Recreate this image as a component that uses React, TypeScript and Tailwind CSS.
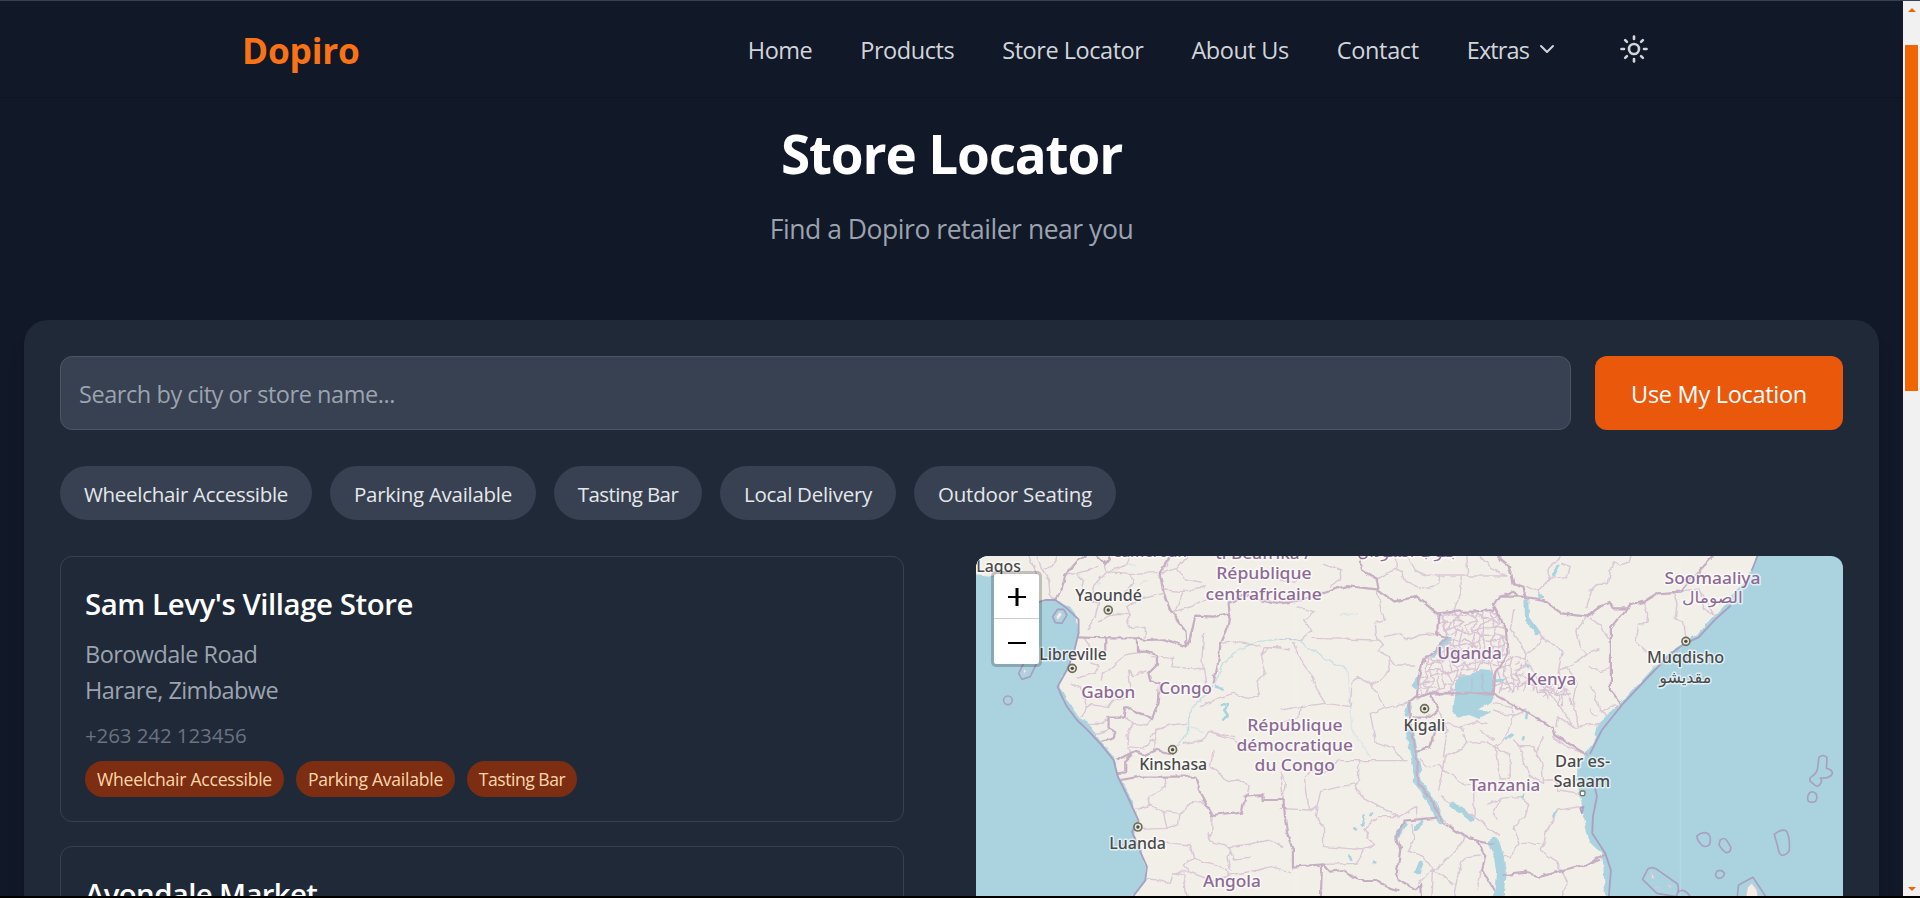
import { ChevronDown, Sun } from "lucide-react";

const navItems = [
  { label: "Home", tracking: "tracking-[-0.5px]" },
  { label: "Products", tracking: "tracking-[-0.44px]" },
  { label: "Store Locator", tracking: "tracking-[-0.46px]" },
  { label: "About Us", tracking: "tracking-[-0.4px]" },
  { label: "Contact", tracking: "tracking-[-0.35px]" },
];

const filters = [
  { label: "Wheelchair Accessible", size: "w-[252px] tracking-[-0.3px]" },
  { label: "Parking Available", size: "w-[206px] tracking-[-0.28px]" },
  { label: "Tasting Bar", size: "w-[148px] tracking-[-0.6px]" },
  { label: "Local Delivery", size: "w-[176px] tracking-[-0.28px]" },
  { label: "Outdoor Seating", size: "w-[202px] tracking-[-0.2px]" },
];

const tags = [
  { label: "Wheelchair Accessible", size: "w-[199px] tracking-[-0.27px]" },
  { label: "Parking Available", size: "w-[159px] tracking-[-0.27px]" },
  { label: "Tasting Bar", size: "w-[110px] tracking-[-0.5px]" },
];

function Header() {
  return (
    <header className="flex h-[98px] shrink-0 items-center justify-between border-b border-t border-b-[#111522] border-t-[#374151] pl-[242px] pr-[242px]">
      <span className="pt-[3px] text-[35.3px] font-bold tracking-[-0.2px] text-[#f97316]">Dopiro</span>
      <nav className="flex items-center gap-12 text-[23.5px] text-[#d1d5db]">
        {navItems.map((n) => (
          <a key={n.label} className={`whitespace-nowrap pt-[3px] ${n.tracking}`}>
            {n.label}
          </a>
        ))}
        <button className="flex items-center gap-1.5 tracking-[-0.9px]">
          <span className="pt-[3px]">Extras</span>
          <ChevronDown size={24} strokeWidth={2} />
        </button>
        <button className="p-3">
          <Sun size={30} strokeWidth={2.1} />
        </button>
      </nav>
    </header>
  );
}

/* ---------- map ---------- */

type Pt = [number, number];

function rng(seed: number) {
  let s = seed;
  return () => {
    s = (s * 16807) % 2147483647;
    return s / 2147483647;
  };
}

/* Irregular net of small districts */
function districtNet(x0: number, y0: number, cols: number, rows: number, step: number, seed: number) {
  const r = rng(seed);
  const p: Pt[][] = [];
  for (let j = 0; j < rows; j++) {
    p.push([]);
    for (let i = 0; i < cols; i++) {
      p[j].push([x0 + i * step + (r() - 0.5) * step * 1.1, y0 + j * step + (r() - 0.5) * step * 1.1]);
    }
  }
  let d = "";
  for (let j = 0; j < rows; j++) {
    for (let i = 0; i < cols; i++) {
      const [x, y] = p[j][i];
      if (i + 1 < cols && r() < 0.85) d += `M${x.toFixed(1)} ${y.toFixed(1)}L${p[j][i + 1][0].toFixed(1)} ${p[j][i + 1][1].toFixed(1)}`;
      if (j + 1 < rows && r() < 0.85) d += `M${x.toFixed(1)} ${y.toFixed(1)}L${p[j + 1][i][0].toFixed(1)} ${p[j + 1][i][1].toFixed(1)}`;
    }
  }
  return d;
}

const ugandaNet = districtNet(400, 180, 17, 16, 18, 77);
const kenyaNet = districtNet(640, 330, 13, 8, 19, 31);

const westBorders =
  "M255 150L275 110 285 75 320 35 345 18M380 18L405 42 420 22M650 290L645 240 600 180 580 130 568 70 600 18M325 262L405 265 500 265 530 270 580 268 650 290 665 245 675 197 730 200 778 190 775 160 820 135 880 150 930 160 1000 150M778 190L770 240 750 285 745 330 730 400M405 265L405 300M500 265L500 305 530 305 560 315 560 345 535 370 540 390 570 400 565 460 545 505 510 490 480 475 465 475 460 500 415 500 415 535 435 545 430 565 395 575M440 630L490 605 465 630 465 670 445 672M490 605L525 615 560 600 607 612M450 690L510 680 675 680 690 730 725 795 815 785 825 740 880 735 880 750 940 750";
const westThin =
  "M175 18L190 50 200 75M200 20L215 60 245 50 262 20M215 60L235 90 240 130 255 150M285 75L320 70 340 90 330 130M320 70L360 60 380 45M405 42L410 65 480 70 560 68M480 18L470 45 410 65M410 65L370 110 360 150 385 160 375 200 350 240M455 140L490 100 480 70M385 215L440 190 480 195 470 170 500 150 580 130M480 195L470 215 485 235 525 232 525 262M568 70L620 55 650 18M580 120L640 125 700 110M605 185L650 175 690 155 730 145M620 60L650 90 690 100M345 265L370 300 405 300M370 300L360 340 385 345 372 370 320 385M405 300L400 320M445 330L475 312 530 305M445 330L430 355 400 365 390 390M475 360L490 380 530 360M475 360L480 400 465 440 430 450 415 470 360 460 335 500M545 320L610 325 605 350 700 360 710 430M300 400L330 410 350 470M415 505L395 520 350 520M415 540L370 555M460 500L490 520 470 555 475 590 520 595 540 570 560 575M490 520L530 525 545 505M540 560L560 540 600 525 650 520M475 590L485 620M560 545L550 600M640 580L700 570 715 545 790 570 830 600M730 600L720 650 750 670 770 695 800 690 840 705M715 545L790 560M690 470L740 445 790 430 830 445 870 430 860 390 885 370 870 320 900 290 960 300M870 320L885 290 930 290M585 685L588 710 535 738 540 765 500 778M540 765L580 785 630 790 650 765 695 755 725 790M630 790L625 820 590 835 510 838M580 785L590 835M725 795L725 850 715 860 730 880 775 890 780 910 770 920 780 960M775 890L820 885 900 870 940 890M720 865L710 850M545 870L610 880 660 885 670 925 720 940 770 960 775 975M670 925L640 945 655 965 610 968 600 1000 530 985M610 968L640 975 650 1040M655 965L720 990 775 975 870 960 900 950 960 965M780 900L790 930 840 925M840 705L835 730 820 740M930 680L935 750M600 18L590 50M640 130L615 180M700 250L695 330 710 420M750 280L800 275 870 290";
const midBorders =
  "M240 18L245 60 290 90 295 118M70 150L130 130 165 118 200 108 290 118 340 155 410 140 470 190 530 185 580 185 635 180 660 140 730 140 790 150 845 190 920 200 960 170M640 165L680 240 685 310 645 370 640 430M475 190L470 255 500 265 465 300 430 330 415 380 410 440 385 460M410 445L450 430 640 430 820 535 825 555 920 615M385 460L395 560 410 640 415 700 460 760 490 820 550 855 600 872 640 880M450 430L475 480 450 500 400 500M475 520L450 590 410 605M470 803L375 812 350 860 360 900 350 970 355 990 410 1018 420 1005 422 1040M670 975L740 968 780 980 840 965 920 945 960 930M590 870L615 920 605 960 640 1020M650 18L685 45 700 100 730 110 735 140M660 140L700 125 715 140M10 750L12 780 20 850 38 900 38 950 130 943 150 965 190 960 230 990 290 990 320 1010 355 1020M125 945L122 1040";
const midThin =
  "M290 88L345 55 365 65 370 90 410 110 440 115 475 100 478 80M345 20L350 60M385 22L405 60 440 75 475 78 680 78M540 78L538 130 520 185M560 18L562 75M600 20L640 60 680 78M130 40L185 60 180 90 150 110M0 90L40 100 80 60M50 170L100 185 70 210 95 240 60 270 0 265M95 265L290 270 285 220 310 210 300 170 290 118M290 270L310 285 290 300 325 320 345 345 400 345M310 260L360 250 375 270 420 255 470 250M325 320L330 360 300 390 270 400 230 380M40 280L60 330 90 370 110 420 135 460 210 470 215 400 235 380M270 400L290 430 300 450 315 475 385 455M315 475L270 490 285 575 340 595 370 632M0 480L60 470 135 460M60 470L55 500 0 520M180 632L380 632M235 635L235 690 225 710 245 740 300 770 355 800M75 680L90 660 130 670 175 632M75 680L85 780 0 775M85 780L110 770 120 725 180 710 230 700M110 770L105 800 130 830 130 890 200 895 250 900 230 940 130 943M250 900L280 885 250 840 290 800 355 800 410 770 408 800M0 670L15 700 8 750M475 720L490 660 480 640 440 650 420 630M490 660L520 680 550 700 590 710M490 660L495 620 540 600 560 580 620 575 645 590 680 560 695 500 740 480M560 580L545 530 590 515 620 520M495 520L545 530M475 480L500 540 490 620M645 590L650 630 660 690 690 680 690 620 645 590M720 590L730 640 750 680 790 700 785 640 760 590 720 590 700 570M790 560L770 600M820 560L860 590 910 610M790 690L830 690 835 720 900 730M580 720L582 800 620 830 660 860M582 800L530 770 480 740M620 760L660 745 720 740 745 760 735 800 700 830 720 880 690 920 640 920M660 745L640 790 650 810M720 880L790 880 780 900 830 935 845 965M790 880L800 840 820 810 830 780 905 770M845 965L860 1000 845 1040M480 800L550 860 545 880 490 940 440 975 415 1000M395 820L400 870 385 900 430 920 460 960 520 1000M460 960L455 1040M550 860L600 870M520 1040L540 940 560 920 600 915M600 960L590 1020M480 195L500 250M690 320L740 330 780 400 830 460 880 530 960 520M700 180L690 240 740 310 770 290 785 260 830 290 845 310 835 360 870 350 920 310 960 300M785 260L775 245M835 360L850 420 880 470 895 530M780 420L860 440 870 430M740 310L735 345 700 360M920 200L890 240 900 290 920 310M740 110L770 125 810 85 800 60 840 20M810 85L860 80 870 50 845 40M920 170L940 110 960 100M770 125L780 140M830 530L835 500 880 530M640 480L700 500 695 470 640 460M600 540L640 570M860 350L890 400 880 460";
const eastBorders =
  "M0 190L25 170 60 158 70 175 110 175 125 165 160 155 200 130 270 125 300 90 370 18M110 175L62 235 62 420 95 465M0 940L45 910";
const eastThin =
  "M0 120L20 100 55 100 60 60 70 35 90 45 120 35 125 18M160 160L172 190 170 220 145 222 138 275 170 305M250 128L260 160 255 205 280 215 287 262M0 205L30 225 40 250 60 265M0 350L30 365 60 355M0 405L15 430 30 485 60 470 95 465M30 485L50 500M0 480L20 500M270 125L330 120 375 200M330 120L340 175 375 195";

function City({ x, y }: { x: number; y: number }) {
  return (
    <g>
      <circle cx={x} cy={y} r="12" fill="#e9e7d8" stroke="#6f6d5f" strokeWidth="5" />
      <circle cx={x} cy={y} r="5" fill="#4b4a42" />
    </g>
  );
}

function Label({ x, x2, y, t, kind }: { x: number; x2: number; y: number; t: string; kind: "city" | "land" }) {
  return (
    <text
      x={x}
      y={y}
      textLength={x2 - x}
      lengthAdjust="spacingAndGlyphs"
      fontSize={kind === "city" ? 49 : 48}
      fontWeight="500"
      className={kind === "city" ? "fill-[#4a4a4c]" : "fill-[#8d6a95]"}
      stroke="#ffffff"
      strokeOpacity="0.65"
      strokeWidth="9"
      strokeLinejoin="round"
      paintOrder="stroke"
    >
      {t}
    </text>
  );
}

function MapDrawing() {
  const thin = { stroke: "#dac8d6", strokeWidth: 4.2 };
  const thick = { stroke: "#c6aec3", strokeWidth: 6.5 };
  const water = { stroke: "#aad3df", fill: "none" };
  return (
    <svg viewBox="976 556 867 340" className="block h-full w-full bg-[#aad3df]" fontFamily="'Noto Sans', 'DejaVu Sans', sans-serif">
      <defs>
        <filter id="rough" filterUnits="userSpaceOnUse" x="0" y="0" width="2700" height="1100" colorInterpolationFilters="sRGB">
          <feTurbulence type="fractalNoise" baseFrequency="0.035" numOctaves="2" seed="4" result="n" />
          <feDisplacementMap in="SourceGraphic" in2="n" scale="16" xChannelSelector="R" yChannelSelector="G" />
        </filter>
        <clipPath id="uganda">
          <path d="M475 190L530 185 635 180 645 168 682 240 685 310 645 370 640 430 450 430 410 445 415 380 430 330 465 300 500 265 470 255Z" />
        </clipPath>
        <clipPath id="kenya">
          <path d="M685 310L725 340 730 375 780 400 860 410 880 460 840 470 760 420 690 430 640 425 645 370Z" />
        </clipPath>
      </defs>
      <g transform="translate(970 550) scale(0.33333)" fill="none" strokeLinejoin="round" strokeLinecap="round">
        <g filter="url(#rough)">
          <path
            fill="#f2efe9"
            d="M0 0L0 72 70 78 140 120 200 155 250 150 285 165 318 190 325 250 315 300 298 350 275 385 270 410 300 465 325 500 350 515 395 580 430 620 448 680 480 740 505 810 492 850 510 900 530 950 525 990 480 1050L1905 1050 1900 960 1895 905 1865 885 1850 850 1840 790 1830 740 1820 690 1822 650 1840 620 1860 590 1875 560 1882 525 1905 503 1960 450 2030 375 2100 305 2145 275 2185 250 2235 195 2270 160 2300 120 2335 80 2350 45 2365 0Z"
          />
          <g {...thin}>
            <path d={westThin} />
            <path d={midThin} transform="translate(930 0)" />
            <path d={eastThin} transform="translate(1860 0)" />
          </g>
          <g transform="translate(930 0)" stroke="#d8c4d4" strokeWidth="4">
            <path d={ugandaNet} clipPath="url(#uganda)" />
            <path d={kenyaNet} clipPath="url(#kenya)" />
          </g>
          <g {...water} transform="translate(930 0)">
            <path fill="#aad3df" stroke="none" d="M522 405L535 382 560 378 600 360 638 365 642 430 630 455 598 478 630 488 600 507 560 495 530 503 516 490 518 460 528 440Z" />
            <path d="M388 545L398 600 412 660 408 690 430 718 455 760 482 812" strokeWidth="21" />
            <path d="M500 268L460 312M415 388L403 408M388 464L381 495" strokeWidth="16" />
            <path d="M740 152L742 208 768 245" strokeWidth="15" />
            <path d="M640 875L655 915 662 965 655 1050" strokeWidth="29" />
            <path d="M518 765L575 808M375 822L352 858M422 940L412 965M425 818L410 832" strokeWidth="15" />
            <path d="M835 45L820 78M775 140L788 140M740 490L738 505M700 555L680 568M730 562L728 568M645 392L672 390M820 800L828 785M250 800L245 825M275 785L270 795M225 835L230 838M205 920L210 926M725 742L730 738M280 938L282 940M740 346L742 348" strokeWidth="8" />
          </g>
          <path {...water} d="M740 410L760 415M755 462L775 465 762 480 772 495 762 512" strokeWidth="8" />
          <path {...water} strokeOpacity="0.6" d="M735 400L760 340 800 300 860 275 930 267 980 267 1030 305 1090 340 1130 355M655 495L680 460 730 410M655 495L655 550 610 595" strokeWidth="4" />
          <path {...water} strokeOpacity="0.3" d="M1130 355L1135 430 1145 540 1200 620M660 533L700 545M475 45L495 50M510 105L530 95M380 105L388 100M1110 195L1160 190" strokeWidth="4" />
          <g {...thick}>
            <path d={westBorders} />
            <path d={midBorders} transform="translate(930 0)" />
            <path d={eastBorders} transform="translate(1860 0)" />
          </g>
          <path d="M1505 388V425M1538 370V428" stroke="#b4bfd3" strokeWidth="4" />
        </g>
        <g stroke="#a8a0c0" strokeWidth="5.5">
          <path d="M70 78L140 120 200 158 225 150 255 150 290 175 325 208 325 250 310 310 290 360 262 410 275 440 290 470 320 510 350 538 392 583 430 630 443 680 472 740 505 812 485 845 508 900 530 950 525 992 480 1050" />
          <path d="M2362 18L2345 60M2280 168L2235 208 2185 262 2145 280 2100 312 2025 390 1955 465 1895 540 1860 610M1870 690L1880 740 1868 800 1866 850 1905 910 1922 960 1915 1050" />
        </g>
        <g stroke="#a8a0c0" strokeWidth="5">
          <path d="M262 178L280 178 290 195 275 220 255 218 247 200ZM175 330L200 338 180 380 155 388 145 370 160 340Z" />
          <circle cx="113" cy="451" r="13" />
          <path d="M1830 775L1840 770 1835 790Z" />
        </g>
        <path fill="#f2efe9" stroke="#d9c6d5" strokeWidth="2" d="M270 185L275 195 262 210 258 200ZM160 358L168 362 162 372Z" />
        <g transform="translate(1860 0)" stroke="#a8a0c0" strokeWidth="5">
          <path d="M686 622Q698 612 710 622Q710 645 708 655Q728 658 726 672Q718 686 690 684Q698 692 690 702Q684 712 675 706L660 694Q656 684 664 680Q680 670 682 655ZM658 728Q668 722 676 730Q684 742 676 754Q665 760 655 754Q648 742 658 728ZM320 858Q338 842 355 852Q364 862 358 884Q346 894 336 886Q320 872 320 858ZM390 870Q402 860 410 872L422 892Q422 908 408 908Q396 902 386 884ZM552 853Q572 836 588 842Q600 860 597 902Q590 916 574 916Q566 912 563 892ZM380 964Q394 956 403 970Q400 984 386 985Q370 980 380 964ZM157 988L172 958Q184 948 200 958L262 1002Q268 1020 258 1040L200 1030ZM262 1028Q280 1010 300 1040M440 1050L445 1005 488 982 530 1045" />
          <path fill="#f2efe9" stroke="#d9c6d5" strokeWidth="3" d="M182 965L185 985 192 985ZM195 1012L210 1014ZM232 1005L245 1010 238 1012ZM465 1050L472 1012 485 1000 500 1020 505 1050Z" />
        </g>
        <path d="M977 18V1040M2130 18V1040" stroke="#ffffff" strokeOpacity="0.18" strokeWidth="3" />
        <City x={414} y={180} />
        <City x={306} y={355} />
        <City x={607} y={599} />
        <City x={503} y={831} />
        <City x={1363} y={476} />
        <City x={2147} y={274} />
        <rect x="1830" y="723" width="14" height="14" rx="4" fill="#ffffff" stroke="#77756a" strokeWidth="4" />
        <Label kind="land" x={425} x2={650} y={21} t="Cameroun" />
        <Label kind="land" x={735} x2={1022} y={27} t="tî Bêafrîka /" />
        <Label kind="land" x={1160} x2={1465} y={21} t="جنوب السودان" />
        <Label kind="city" x={18} x2={152} y={66} t="Lagos" />
        <Label kind="city" x={315} x2={515} y={152} t="Yaoundé" />
        <Label kind="city" x={207} x2={410} y={330} t="Libreville" />
        <Label kind="land" x={333} x2={495} y={443} t="Gabon" />
        <Label kind="land" x={567} x2={725} y={433} t="Congo" />
        <Label kind="city" x={507} x2={711} y={661} t="Kinshasa" />
        <Label kind="city" x={417} x2={587} y={897} t="Luanda" />
        <Label kind="land" x={698} x2={872} y={1012} t="Angola" />
        <Label kind="land" x={738} x2={1024} y={88} t="République" />
        <Label kind="land" x={706} x2={1055} y={150} t="centrafricaine" />
        <Label kind="land" x={831} x2={1117} y={544} t="République" />
        <Label kind="land" x={799} x2={1148} y={604} t="démocratique" />
        <Label kind="land" x={853} x2={1094} y={664} t="du Congo" />
        <Label kind="land" x={1401} x2={1595} y={328} t="Uganda" />
        <Label kind="land" x={1669} x2={1818} y={405} t="Kenya" />
        <Label kind="city" x={1300} x2={1425} y={544} t="Kigali" />
        <Label kind="land" x={1496} x2={1710} y={722} t="Tanzania" />
        <Label kind="city" x={1754} x2={1920} y={651} t="Dar es-" />
        <Label kind="city" x={1750} x2={1920} y={711} t="Salaam" />
        <Label kind="land" x={2083} x2={2371} y={101} t="Soomaaliya" />
        <Label kind="land" x={2135} x2={2318} y={160} t="الصومال" />
        <Label kind="city" x={2030} x2={2262} y={339} t="Muqdisho" />
        <Label kind="city" x={2067} x2={2223} y={400} t="مقديشو" />
      </g>
    </svg>
  );
}

function StoreMap() {
  return (
    <div className="relative h-[340px] overflow-hidden rounded-t-xl">
      <MapDrawing />
      <div className="absolute left-[15px] top-[15px] flex flex-col rounded-[5px] border-[3px] border-black/20 bg-white bg-clip-padding">
        <button aria-label="Zoom in" className="flex h-[45px] w-[45px] items-center justify-center border-b border-[#ccc] pl-px pt-0.5">
          <svg width="18" height="18" viewBox="0 0 18 18">
            <path d="M0 9h18" stroke="#000" strokeWidth="2" />
            <path d="M9 0v18" stroke="#000" strokeWidth="3" />
          </svg>
        </button>
        <button aria-label="Zoom out" className="flex h-[45px] w-[45px] items-center justify-center pl-px pt-0.5">
          <svg width="18" height="18" viewBox="0 0 18 18">
            <path d="M0 9h18" stroke="#000" strokeWidth="2" />
          </svg>
        </button>
      </div>
    </div>
  );
}

function StoreList() {
  return (
    <div className="flex flex-col gap-6 pr-6">
      <div className="rounded-xl border border-[#374151] p-6">
        <h3 className="h-[42px] pt-0.5 text-[29.4px] font-semibold leading-[42px] tracking-[-0.44px] text-white">Sam Levy's Village Store</h3>
        <div className="mt-3 h-[72px] pt-px text-[23.5px] leading-9 text-[#9ca3af]">
          <p className="tracking-[-0.55px]">Borowdale Road</p>
          <p className="tracking-[-0.58px]">Harare, Zimbabwe</p>
        </div>
        <p className="mt-3 h-[30px] pt-px text-[20.5px] leading-[30px] tracking-[-0.1px] text-[#6b7280]">+263 242 123456</p>
        <div className="mt-3 flex gap-3">
          {tags.map((t) => (
            <span
              key={t.label}
              className={`flex h-9 items-center justify-center whitespace-nowrap rounded-full bg-[#7c2d12] text-[17.6px] text-[#fed7aa] ${t.size}`}
            >
              {t.label}
            </span>
          ))}
        </div>
      </div>
      <div className="rounded-xl border border-[#374151] p-6">
        <h3 className="h-[42px] pt-0.5 text-[29.4px] font-semibold leading-[42px] tracking-[-0.65px] text-white">Avondale Market</h3>
      </div>
    </div>
  );
}

function Scrollbar() {
  return (
    <div className="flex h-full w-[17px] shrink-0 flex-col items-center border-t border-[#374151] bg-[#f1f1f1]">
      <svg width="8" height="4" viewBox="0 0 8 4" className="mt-[7px]">
        <path d="M4 0L8 4H0Z" fill="#f26505" />
      </svg>
      <div className="mt-[33px] h-[346px] w-[13px] bg-[#f26505]" />
      <svg width="8" height="4" viewBox="0 0 8 4" className="mb-[5px] mt-auto">
        <path d="M0 0H8L4 4Z" fill="#f26505" />
      </svg>
    </div>
  );
}

export default function App() {
  return (
    <div className="h-[898px] w-[1920px] overflow-hidden bg-black font-['Open_Sans',sans-serif]">
      <div className="flex h-[896px] overflow-hidden">
        <div className="flex h-full min-w-0 flex-1 flex-col overflow-hidden bg-[#111827]">
          <Header />
          <div className="flex shrink-0 flex-col items-center pt-[26px]">
            <h1 className="text-[53px] font-bold leading-[60px] tracking-[-1.15px] text-white">Store Locator</h1>
            <p className="mt-6 text-[26.5px] leading-[42px] tracking-[-0.47px] text-[#9ca3af]">Find a Dopiro retailer near you</p>
          </div>
          <main className="mx-6 mt-[70px] h-[700px] shrink-0 rounded-3xl bg-[#1f2937] p-9 shadow-xl">
            <div className="flex h-[74px] gap-6">
              <input
                placeholder="Search by city or store name..."
                className="min-w-0 flex-1 rounded-xl border border-[#4b5563] bg-[#374151] px-[18px] pt-[3px] text-[23.5px] tracking-[-0.44px] text-white placeholder:text-[#9ca3af]"
              />
              <button className="w-[248px] rounded-xl bg-[#ea580c] pt-[3px] text-[23.5px] tracking-[-0.29px] text-white">Use My Location</button>
            </div>
            <div className="mt-9 flex gap-[18px]">
              {filters.map((f) => (
                <button
                  key={f.label}
                  className={`h-[54px] whitespace-nowrap rounded-full bg-[#374151] pt-[2px] text-[20.5px] text-[#e5e7eb] ${f.size}`}
                >
                  {f.label}
                </button>
              ))}
            </div>
            <div className="mt-9 grid grid-cols-2 gap-12">
              <StoreList />
              <StoreMap />
            </div>
          </main>
        </div>
        <Scrollbar />
      </div>
    </div>
  );
}
